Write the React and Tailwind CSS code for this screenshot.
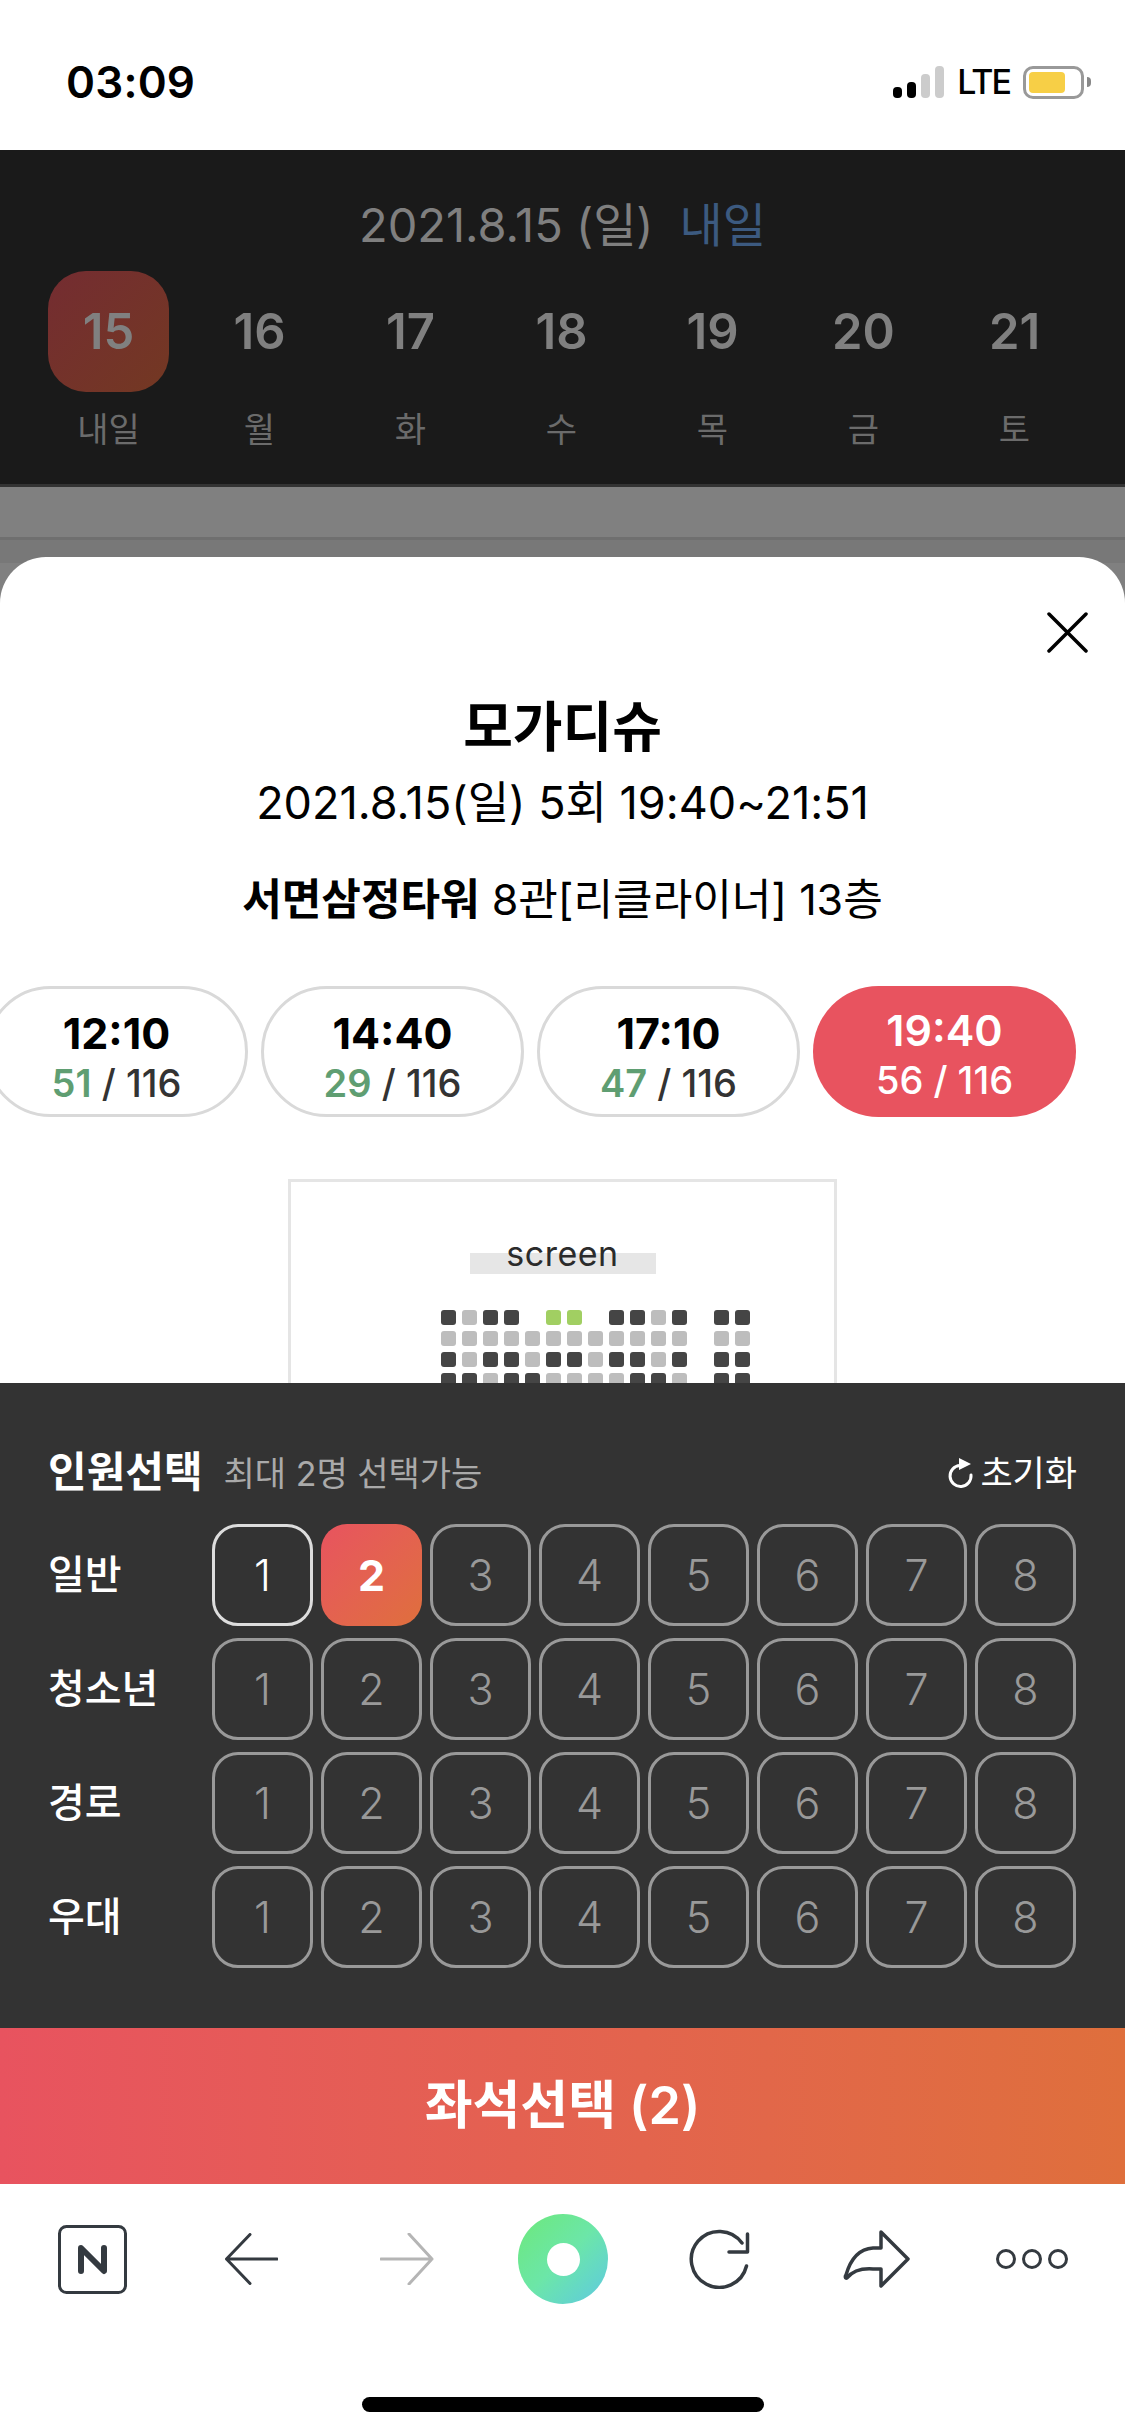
import React from "react";

const FONT = "font-['Inter','Noto_Sans_CJK_KR',sans-serif]";

const days = [
  ["15", "내일"], ["16", "월"], ["17", "화"], ["18", "수"], ["19", "목"], ["20", "금"], ["21", "토"],
];
const times = [
  ["12:10", "51"], ["14:40", "29"], ["17:10", "47"],
];
const seatRows = [
  "DLDD_GG_DDLD_DD",
  "LLLLLLLLLLLL_LL",
  "DLDDLDDLDDLD_DD",
  "DDLDDLLLLDDL_DD",
];
const seatClass = { D: "bg-[#454545]", L: "bg-[#bdbdbd]", G: "bg-[#a1cf62]", _: "bg-transparent" };
const groups = ["일반", "청소년", "경로", "우대"];

function StatusBar() {
  return (
    <div className="h-[150px] bg-white flex items-center pl-[66px] pr-[34px] pt-[14px] justify-between">
      <span className="text-[44px] font-semibold leading-none text-black tracking-[0.2px]">03:09</span>
      <div className="flex items-center">
        <div className="flex items-end gap-[5px] h-[32px]">
          <div className="w-[9px] h-[11px] rounded-[4px] bg-black" />
          <div className="w-[9px] h-[16px] rounded-[4px] bg-black" />
          <div className="w-[9px] h-[24px] rounded-[4px] bg-[#cccccc]" />
          <div className="w-[9px] h-[32px] rounded-[4px] bg-[#cccccc]" />
        </div>
        <span className="ml-[13px] text-[34px] leading-none font-medium text-black tracking-[-2px]">LTE</span>
        <div className="ml-[13px] w-[61px] h-[33px] rounded-[10px] border-[3px] border-[#999999] p-[3px] flex">
          <div className="w-[36px] h-full rounded-[4px] bg-[#f7cf46]" />
        </div>
        <div className="ml-[3px] w-[4px] h-[10px] bg-[#888888] rounded-r-[4px]" />
      </div>
    </div>
  );
}

function DateHeader() {
  return (
    <div className="h-[337px] bg-[#1a1a1a] border-b-[3px] border-[#333333] pt-[45px]">
      <div className="h-[60px] flex items-center justify-center text-[47px] leading-[60px] text-[#7f7f7f]">
        <span>2021.8.15 (일)</span>
        <span className="ml-[26px] text-[#3c5a80]">내일</span>
      </div>
      <div className="mt-[16px] px-[33px] flex">
        {days.map(([n, l], i) => (
          <div key={n} className="w-[151px] flex flex-col items-center">
            <div
              className={
                "w-[121px] h-[121px] rounded-[38px] flex items-center justify-center text-[49px] font-semibold text-[#808080] " +
                (i === 0 ? "bg-gradient-to-br from-[#742c31] to-[#733822]" : "")
              }
            >
              {n}
            </div>
            <div className="mt-[18px] text-[34px] leading-[40px] text-[#6b6b6b]">{l}</div>
          </div>
        ))}
      </div>
    </div>
  );
}

function Seats() {
  return (
    <div className="flex flex-col gap-[6px] mt-[36px] ml-[66px]">
      {seatRows.map((r, y) => (
        <div key={y} className="flex gap-[6px]">
          {r.split("").map((c, x) => (
            <div key={x} className={"w-[15px] h-[15px] rounded-[3px] " + seatClass[c]} />
          ))}
        </div>
      ))}
    </div>
  );
}

function TimePills() {
  return (
    <div className="mt-[62px] -ml-[15px] flex gap-[13px] items-stretch">
      {times.map(([t, c]) => (
        <div key={t} className="w-[263px] h-[131px] rounded-[66px] border-[3px] border-[#d9d9d9] flex flex-col items-center justify-center shrink-0 pt-[13px]">
          <div className="text-[43px] leading-[50px] font-bold text-black">{t}</div>
          <div className="text-[38px] leading-[50px] font-medium text-[#333333]">
            <span className="text-[#5f9e72] font-semibold">{c}</span> / 116
          </div>
        </div>
      ))}
      <div className="w-[263px] h-[131px] rounded-[66px] bg-[#e8535f] flex flex-col items-center justify-center shrink-0 text-white pt-[7px]">
        <div className="text-[43px] leading-[50px] font-semibold">19:40</div>
        <div className="text-[38px] leading-[50px] font-medium">56 / 116</div>
      </div>
    </div>
  );
}

function Modal() {
  return (
    <div className="h-[826px] bg-white rounded-t-[46px] relative overflow-hidden flex flex-col items-center">
      <svg className="absolute left-[1047px] top-[55px]" width="41" height="41" viewBox="0 0 41 41" fill="none">
        <path d="M2 2 L39 39 M39 2 L2 39" stroke="#000" strokeWidth="3.5" strokeLinecap="round" />
      </svg>
      <div className="mt-[136px] h-[70px] text-[54px] leading-[70px] font-bold text-black">모가디슈</div>
      <div className="mt-[15px] h-[50px] text-[45px] leading-[50px] text-black">2021.8.15(일) 5회 19:40~21:51</div>
      <div className="mt-[46px] h-[50px] text-[43px] leading-[50px] text-black">
        <span className="font-bold">서면삼정타워</span> 8관[리클라이너] 13층
      </div>
      <div className="self-stretch">
        <TimePills />
      </div>
      <div className="mt-[62px] w-[549px] h-[300px] border-[3px] border-[#e5e5e5] shrink-0 flex flex-col items-center pt-[71px]">
        <div className="w-[186px] h-[21px] bg-[#e6e6e6] flex justify-center">
          <span className="text-[34px] leading-[21px] text-[#2b2b2b] -translate-y-[10px] tracking-[0.5px]">screen</span>
        </div>
        <Seats />
      </div>
    </div>
  );
}

function PersonPanel() {
  return (
    <div className="h-[645px] bg-[#333333] px-[48px] pt-[64px]">
      <div className="h-[50px] flex items-center">
        <span className="text-[42px] leading-[50px] font-bold text-white">인원선택</span>
        <span className="ml-[21px] text-[34px] leading-[50px] text-[#aaaaaa] mt-[4px]">최대 2명 선택가능</span>
        <div className="ml-auto flex items-center text-white mt-[2px]">
          <svg width="26" height="32" viewBox="0 0 26 32" fill="none">
            <path d="M12 8.5 A10.5 10.5 0 1 0 23 18" stroke="#fff" strokeWidth="3" strokeLinecap="round" />
            <path d="M11 1 L23 7 L11 13 Z" fill="#fff" />
          </svg>
          <span className="ml-[6px] text-[35px] leading-[50px]">초기화</span>
        </div>
      </div>
      <div className="mt-[27px] flex flex-col gap-[12px]">
        {groups.map((g, r) => (
          <div key={g} className="flex items-center">
            <div className="w-[164px] text-[40px] font-medium text-white">{g}</div>
            <div className="flex gap-[8px]">
              {[1, 2, 3, 4, 5, 6, 7, 8].map((n) => {
                const first = r === 0 && n === 1;
                const second = r === 0 && n === 2;
                return (
                  <div
                    key={n}
                    className={
                      "w-[101px] h-[102px] rounded-[26px] flex items-center justify-center text-[43px] " +
                      (second
                        ? "bg-gradient-to-br from-[#e8535f] to-[#df6f3c] text-white font-bold"
                        : first
                        ? "border-[3px] border-[#dddddd] text-white font-light"
                        : "border-[3px] border-[#999999] text-[#999999] font-light")
                    }
                  >
                    {n}
                  </div>
                );
              })}
            </div>
          </div>
        ))}
      </div>
    </div>
  );
}

function BottomNav() {
  const s = "#343a40";
  return (
    <div className="h-[252px] bg-white">
      <div className="h-[150px] flex items-center pl-[58px]">
        <svg width="69" height="69" viewBox="0 0 69 69" fill="none">
          <rect x="1.5" y="1.5" width="66" height="66" rx="7" stroke={s} strokeWidth="3" />
          <path d="M23 46 V23 L46 46 V23" stroke={s} strokeWidth="6" strokeLinejoin="round" strokeLinecap="round" />
        </svg>
        <svg className="ml-[97px]" width="54" height="52" viewBox="0 0 54 52" fill="none">
          <path d="M26 1.5 L2.5 26 L26 50.5 M2.5 26 H53" stroke={s} strokeWidth="3" strokeLinecap="round" strokeLinejoin="round" />
        </svg>
        <svg className="ml-[102px]" width="54" height="52" viewBox="0 0 54 52" fill="none">
          <path d="M29 1 L52 26 L29 51 M52 26 H1" stroke="#b5b5b5" strokeWidth="3" strokeLinecap="round" strokeLinejoin="round" />
        </svg>
        <div className="ml-[84px] w-[90px] h-[90px] rounded-full bg-gradient-to-br from-[#6de878] via-[#6ce6a8] to-[#5fc8e0] flex items-center justify-center">
          <div className="w-[33px] h-[33px] rounded-full bg-white" />
        </div>
        <svg className="ml-[80px]" width="62" height="60" viewBox="0 0 62 60" fill="none">
          <path d="M58.5 37 A28 28 0 1 1 54 14" stroke={s} strokeWidth="3.5" strokeLinecap="round" />
          <path d="M59.5 5 V23 H41" stroke={s} strokeWidth="3.5" strokeLinecap="round" strokeLinejoin="round" />
        </svg>
        <svg className="ml-[93px]" width="67" height="60" viewBox="0 0 67 60" fill="none">
          <path
            d="M38 3 L65 30 L38 57 V40 H30 C16 39 8 44 4 49 C2 50 2 47 3 46 C7 32 14 20 30 19 H38 Z"
            stroke={s}
            strokeWidth="3.5"
            strokeLinejoin="round"
          />
        </svg>
        <svg className="ml-[86px]" width="72" height="20" viewBox="0 0 72 20" fill="none">
          <circle cx="10" cy="10" r="8.5" stroke={s} strokeWidth="3" />
          <circle cx="36" cy="10" r="8.5" stroke={s} strokeWidth="3" />
          <circle cx="62" cy="10" r="8.5" stroke={s} strokeWidth="3" />
        </svg>
      </div>
      <div className="mt-[63px] mx-auto w-[402px] h-[15px] rounded-full bg-black" />
    </div>
  );
}

export default function App() {
  return (
    <div className={"w-[1125px] h-[2436px] overflow-hidden bg-white flex flex-col " + FONT}>
      <StatusBar />
      <DateHeader />
      <div className="h-[50px] bg-[#808080]" />
      <div className="h-[3px] bg-[#6f6f6f]" />
      <div className="h-[17px] bg-[#787878]" />
      <div className="bg-[linear-gradient(#787878_6px,#808080_6px)]">
        <Modal />
      </div>
      <PersonPanel />
      <div className="h-[156px] bg-gradient-to-r from-[#e8535f] to-[#df6f3c] flex items-center justify-center text-[52px] font-semibold text-white">
        좌석선택 (2)
      </div>
      <BottomNav />
    </div>
  );
}
